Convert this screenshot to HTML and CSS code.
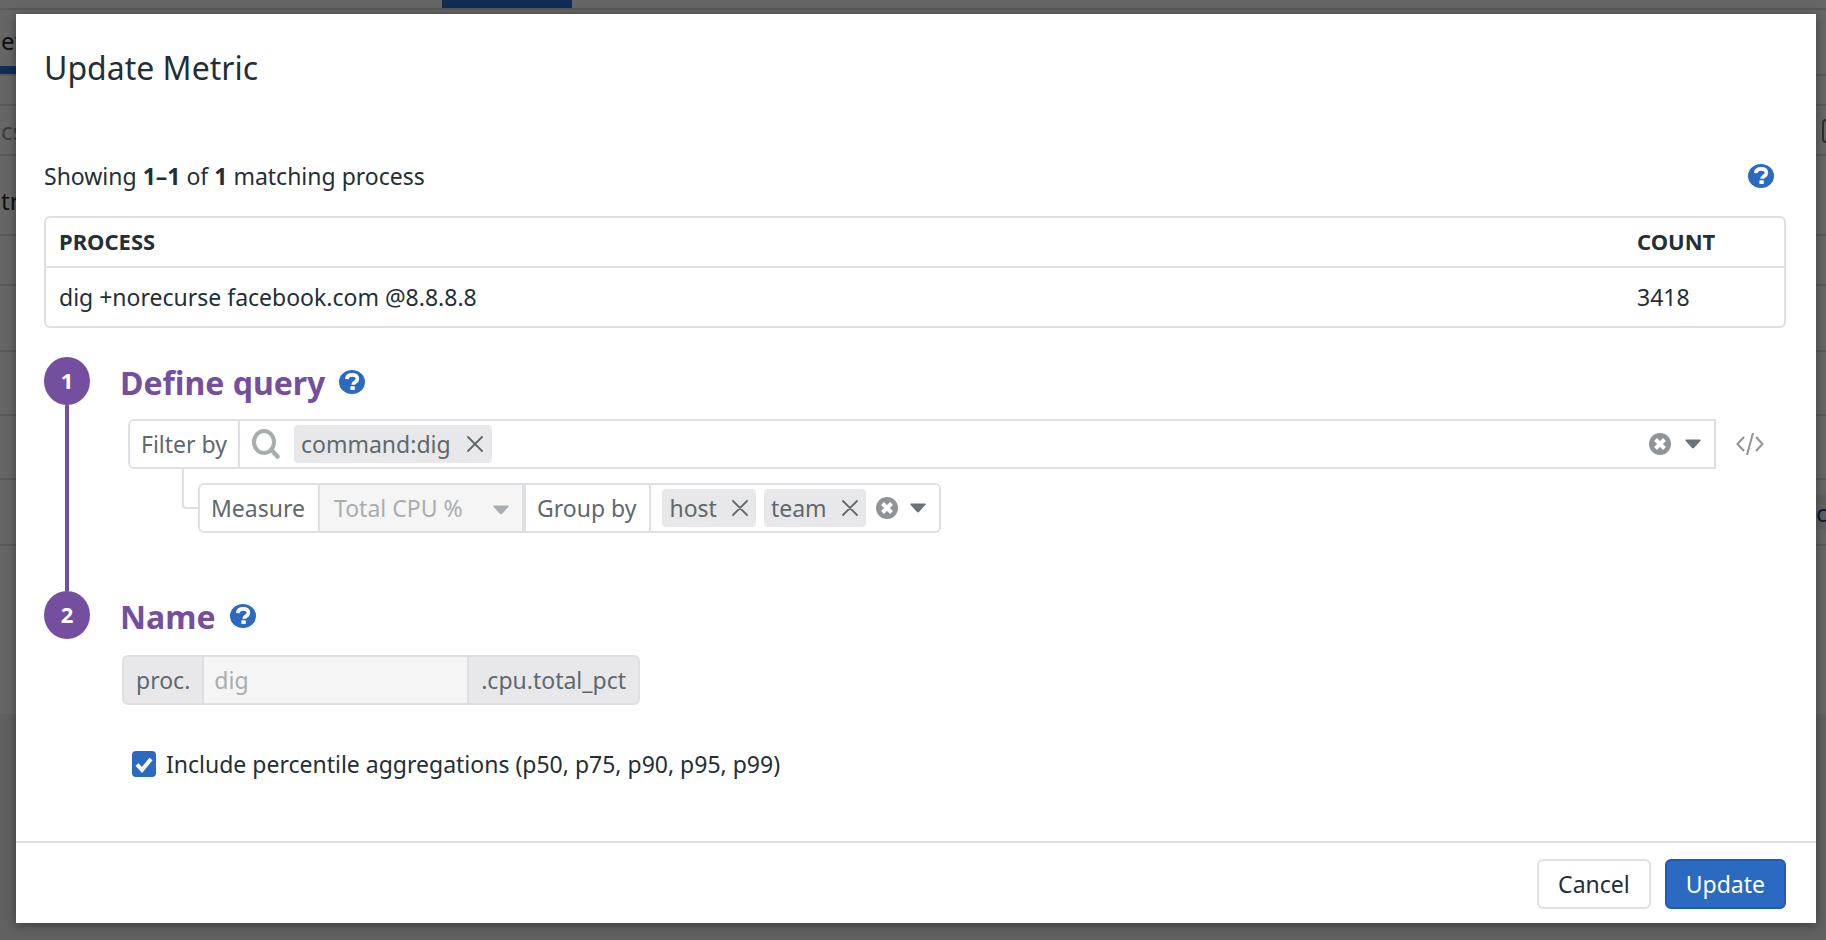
FILE: index.html
```
<!DOCTYPE html>
<html lang="en">
<head>
<meta charset="utf-8">
<title>Update Metric</title>
<link rel="stylesheet" href="styles.css">
</head>
<body>
<svg class="sprite" aria-hidden="true">
  <symbol id="help" viewBox="0 0 26 24" preserveAspectRatio="none">
    <ellipse cx="13" cy="12" rx="13" ry="12" fill="#2a6ac0"/>
    <path d="M7.800 9.200C8 6.400 10 4.900 13.100 4.900c3.200 0 5.300 1.500 5.300 4 0 3.300-4.300 3.100-4.300 5.900" fill="none" stroke="#fff" stroke-width="3.600"/>
    <rect x="11.400" y="16.200" width="4.400" height="3.900" rx=".6" fill="#fff"/>
  </symbol>
  <symbol id="close" viewBox="0 0 16 16">
    <path d="M1 1l14 14M15 1L1 15" fill="none" stroke="#5f686c" stroke-width="1.800" stroke-linecap="round"/>
  </symbol>
  <symbol id="clear" viewBox="0 0 22 22">
    <circle cx="11" cy="11" r="11" fill="#8f9497"/>
    <path d="M6.500 6.500l9 9M15.500 6.500l-9 9" fill="none" stroke="#fff" stroke-width="4"/>
  </symbol>
  <symbol id="caret" viewBox="0 0 16 10">
    <path d="M1 .5h14q1.200.2.500 1.300L9.200 8.700q-1.200 1.100-2.400 0L.5 1.800Q-.2.700 1 .5z" fill="currentColor"/>
  </symbol>
</svg>

<div class="page" aria-hidden="true">
  <div class="topbar"><span class="topbar-tab"></span></div>
  <div class="tabs"><span class="tab">et</span></div>
  <div class="row h30"></div>
  <div class="row h50 muted"><span>cs</span><span class="page-box"></span></div>
  <div class="row h80">tr</div>
  <div class="row h50"></div>
  <div class="row h66"></div>
  <div class="row h64"></div>
  <div class="row h64"></div>
  <div class="row h66 end"><span class="page-tag">c</span></div>
  <div class="row h168"></div>
</div>

<div class="overlay">
  <main class="modal" role="dialog" aria-labelledby="title">
    <h1 class="title" id="title">Update Metric</h1>

    <div class="summary">
      <p class="summary-text">Showing <b>1–1</b> of <b>1</b> matching process</p>
      <button class="icon-btn" type="button" aria-label="Help"><svg class="help"><use href="#help"/></svg></button>
    </div>

    <table class="table">
      <thead><tr><th>PROCESS</th><th class="count">COUNT</th></tr></thead>
      <tbody><tr><td>dig +norecurse facebook.com @8.8.8.8</td><td class="count">3418</td></tr></tbody>
    </table>

    <section class="step step-query">
      <div class="rail"><span class="num">1</span><span class="line"></span></div>
      <div class="step-body">
        <h2 class="step-title">Define query <button class="icon-btn" type="button" aria-label="Help with queries"><svg class="help"><use href="#help"/></svg></button></h2>
        <div class="query">
          <div class="filter-row">
            <div class="group grow">
              <label class="cell" for="filter">Filter by</label>
              <div class="cell search">
                <svg class="search-icon" viewBox="0 0 28 30" aria-hidden="true"><ellipse cx="12" cy="13" rx="10" ry="11" fill="none" stroke="#a8adaf" stroke-width="4"/><path d="M19.500 21l6 6.500" stroke="#a8adaf" stroke-width="4.500" stroke-linecap="round"/></svg>
                <span class="tag">command:dig <button class="icon-btn" type="button" aria-label="Remove command:dig"><svg class="close"><use href="#close"/></svg></button></span>
                <input class="bare-input" id="filter" type="text">
                <button class="icon-btn" type="button" aria-label="Clear filter"><svg class="clear"><use href="#clear"/></svg></button>
                <button class="icon-btn" type="button" aria-label="Open filter list"><svg class="caret"><use href="#caret"/></svg></button>
              </div>
            </div>
            <button class="icon-btn" type="button" aria-label="Edit as code"><svg class="code" viewBox="0 0 28 22"><path d="M8 4L1.500 11 8 18M20 4l6.500 7L20 18M17 0l-6 22" fill="none" stroke="#8f9497" stroke-width="2"/></svg></button>
          </div>
          <div class="measure-row">
            <span class="elbow"></span>
            <div class="group">
              <label class="cell" for="measure">Measure</label>
              <div class="cell select-wrap">
                <select class="select" id="measure" disabled><option>Total CPU %</option></select>
                <svg class="caret select-caret"><use href="#caret"/></svg>
              </div>
              <span class="cell">Group by</span>
              <div class="cell tags">
                <span class="tag">host <button class="icon-btn" type="button" aria-label="Remove host"><svg class="close"><use href="#close"/></svg></button></span>
                <span class="tag">team <button class="icon-btn" type="button" aria-label="Remove team"><svg class="close"><use href="#close"/></svg></button></span>
                <button class="icon-btn" type="button" aria-label="Clear groups"><svg class="clear"><use href="#clear"/></svg></button>
                <button class="icon-btn" type="button" aria-label="Open group list"><svg class="caret"><use href="#caret"/></svg></button>
              </div>
            </div>
          </div>
        </div>
      </div>
    </section>

    <section class="step">
      <div class="rail"><span class="num">2</span></div>
      <div class="step-body">
        <h2 class="step-title">Name <button class="icon-btn" type="button" aria-label="Help with names"><svg class="help"><use href="#help"/></svg></button></h2>
        <div class="name-group">
          <label class="affix" for="name">proc.</label>
          <input class="name-input" id="name" type="text" value="dig" disabled>
          <span class="affix">.cpu.total_pct</span>
        </div>
        <label class="check">
          <input class="checkbox" type="checkbox" checked>
          <svg class="tick" viewBox="0 0 24 26" aria-hidden="true"><path d="M5 13.500l5 5.500L19 8" fill="none" stroke="#fff" stroke-width="4"/></svg>
          <span>Include percentile aggregations (p50, p75, p90, p95, p99)</span>
        </label>
      </div>
    </section>

    <footer class="footer">
      <button class="btn" type="button">Cancel</button>
      <button class="btn primary" type="button">Update</button>
    </footer>
  </main>
</div>
</body>
</html>
```
FILE: styles.css
```
* { box-sizing: border-box; }
body {
  margin: 0;
  min-height: 100vh;
  overflow: hidden;
  background: #f2f2f2;
  color: #232f35;
  font: 23px/32px "Noto Sans", sans-serif;
}
svg { display: block; }
.sprite { position: absolute; width: 0; height: 0; }
button, input, select { font: inherit; color: inherit; }

/* Page behind the dialog */
.page { display: flex; flex-direction: column; font-size: 24px; }
.topbar { height: 10px; background: #fff; border-bottom: 2px solid #dedede; }
.topbar-tab { display: block; width: 130px; height: 8px; margin-left: 442px; background: #2a72d8; }
.tabs { height: 66px; background: #fff; border-bottom: 2px solid #dedede; }
.tab { display: inline-flex; align-items: center; height: 64px; padding: 6px 0 0 1px; border-bottom: 8px solid #2a72d8; }
.row { display: flex; align-items: center; justify-content: space-between; padding-left: 1px; background: #fff; border-bottom: 2px solid #dedede; }
.h30 { height: 30px; }
.h50 { height: 50px; }
.h64 { height: 64px; }
.h66 { height: 66px; }
.h80 { height: 80px; padding-top: 12px; }
.h168 { height: 168px; border-bottom: 0; }
.muted { padding-top: 2px; color: #9a9a9a; }
.end { justify-content: flex-end; }
.page-box { width: 4px; height: 24px; border: 2px solid #777; border-right: 0; border-radius: 4px 0 0 4px; }
.page-tag { width: 10px; height: 36px; background: #f0f0f0; color: #1b3f8a; line-height: 38px; overflow: hidden; }

/* Dialog */
.overlay {
  position: absolute;
  inset: 0;
  padding: 14px 10px 16px 16px;
  background: rgba(0, 0, 0, .6);
}
.modal { padding: 31px 30px 14px 28px; background: #fff; box-shadow: 0 2px 10px rgba(0, 0, 0, .4); }
.title { margin: 0; font-size: 32px; line-height: 46px; font-weight: 400; }
.summary { display: flex; align-items: center; justify-content: space-between; margin-top: 67px; padding-right: 12px; }
.summary-text { margin: 0; line-height: 36px; }
.icon-btn { flex: none; padding: 0; border: 0; background: none; }
.help { width: 26px; height: 24px; }

.table { width: 100%; margin-top: 22px; border: 2px solid #dedfe3; border-radius: 6px; border-spacing: 0; }
.table th, .table td { padding: 0 13px; text-align: left; }
.table th { height: 50px; padding-bottom: 2px; border-bottom: 2px solid #dedfe3; font-size: 22px; }
.table td { height: 58px; }
.table .count { width: 160px; }

.step { display: flex; gap: 30px; }
.step-query { margin-top: 29px; }
.rail { display: flex; flex: none; flex-direction: column; align-items: center; width: 46px; }
.num { display: flex; align-items: center; justify-content: center; width: 46px; height: 48px; padding-bottom: 2px; border-radius: 50%; background: #744fa0; color: #fff; font-size: 22px; font-weight: 700; }
.line { flex: 1; width: 4px; background: #744fa0; }
.step-body { flex: 1; min-width: 0; }
.step-title { display: flex; align-items: center; gap: 14px; margin: 0; padding-top: 2px; color: #744fa0; font-size: 32px; line-height: 48px; font-weight: 700; }
.step-title .icon-btn { padding-bottom: 2px; }

.query { padding: 12px 0 58px 8px; color: #5f686c; }
.filter-row { display: flex; align-items: center; gap: 20px; padding-right: 22px; }
.group { display: flex; height: 50px; border: 2px solid #dedfe3; border-radius: 6px; }
.grow { flex: 1; border-radius: 6px 0 0 6px; }
.cell { display: flex; align-items: center; padding: 0 11px; }
.cell + .cell { border-left: 2px solid #dedfe3; }
.cell.search { flex: 1; padding: 0 13px 0 12px; }
.search-icon { flex: none; width: 28px; height: 30px; margin-right: 14px; }
.tag { display: flex; align-items: center; gap: 16px; height: 38px; padding: 0 9px 0 7px; border-radius: 4px; background: #e8e8eb; }
.close { width: 16px; height: 16px; }
.bare-input { flex: 1; min-width: 0; border: 0; outline: 0; background: none; }
.clear { width: 22px; height: 22px; }
.caret { width: 16px; height: 10px; color: #6c7378; }
.search .clear { margin-right: 14px; }
.code { width: 28px; height: 22px; }

.measure-row { display: flex; padding-left: 54px; }
.measure-row .group { margin-top: 14px; }
.measure-row .cell { padding: 0 13px 0 11px; }
.elbow { width: 16px; height: 40px; border: solid #dedfe3; border-width: 0 0 2px 2px; border-radius: 0 0 0 4px; }
.measure-row .select-wrap { position: relative; padding: 0; background: #f5f5f6; }
.select { width: 204px; height: 46px; padding: 0 14px; border: 0; border-right: 2px solid #dedfe3; background: none; color: #a9adaf; opacity: 1; appearance: none; }
.select-caret { position: absolute; top: 20px; right: 15px; color: #a9adaf; pointer-events: none; }
.measure-row .tags { gap: 8px; padding: 0 13px 0 11px; }
.tags .tag { gap: 15px; padding: 0 8px 0 7px; }
.tags .clear { margin: 0 4px 0 2px; }

.name-group { display: flex; width: 518px; height: 50px; margin: 14px 0 0 2px; border: 2px solid #dedfe3; border-radius: 6px; background: #e8e8eb; color: #5f686c; }
.affix { display: flex; align-items: center; padding: 0 12px; }
.name-input { flex: 1; min-width: 0; padding: 0 10px; border: solid #dedfe3; border-width: 0 2px; border-radius: 0; background: #f5f5f6; color: #a9adaf; }

.check { display: flex; align-items: center; position: relative; width: max-content; margin: 43px 0 0 12px; line-height: 32px; }
.checkbox { width: 24px; height: 26px; margin: 0 10px 0 0; border-radius: 4px; background: #2a6ac0; appearance: none; }
.tick { position: absolute; left: 0; width: 24px; height: 26px; pointer-events: none; }

.footer { display: flex; justify-content: flex-end; gap: 14px; margin: 61px -30px 0 -28px; padding: 16px 30px 0; border-top: 2px solid #dedfe3; }
.btn { height: 50px; padding: 0 19px; border: 2px solid #dedfe3; border-radius: 6px; background: #fff; }
.btn.primary { border-color: #2058bd; background: #2a6ac0; color: #fff; }
```
